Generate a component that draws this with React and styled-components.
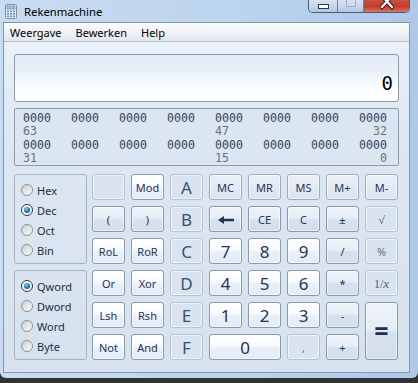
import React from "react"
import styled, { createGlobalStyle, css } from "styled-components"

const GlobalStyle = createGlobalStyle`
  html, body {
    margin: 0;
    padding: 0;
    background: #323232;
  }
  body {
    font-family: "Noto Sans", "Open Sans", sans-serif;
  }
`

const Window = styled.div`
  width: 418px;
  height: 378px;
  box-sizing: border-box;
  padding: 0 8px 5px 3px;
  display: flex;
  flex-direction: column;
  background: linear-gradient(90deg, #c8dcf2 0%, #bdd4ee 55%, #aec8e7 100%);
  border-radius: 0 0 6px 6px;
`

const TitleBar = styled.div`
  height: 22px;
  display: flex;
  align-items: center;
`

const Title = styled.span`
  margin-left: 7px;
  font-size: 11.3px;
  color: #000;
`

const Caption = styled.div`
  margin-left: auto;
  align-self: flex-start;
  display: flex;
  height: 12px;
  border: 1px solid #4a5d78;
  border-top: none;
  border-radius: 0 0 5px 5px;
  overflow: hidden;
`

const CapButton = styled.div`
  width: ${(p) => p.$w}px;
  display: flex;
  justify-content: center;
  overflow: hidden;
  background: linear-gradient(#d7e3f1, #c6d5e8 55%, #b2c6de);
  & + & {
    border-left: 1px solid #6f829d;
  }
  ${(p) =>
    p.$close &&
    css`
      background: linear-gradient(#c9503f, #c13c2c 55%, #d77767);
    `}
`

const MinGlyph = styled.span`
  margin-top: 4px;
  width: 9px;
  height: 3px;
  border: 1px solid #2b3a4f;
  background: #fff;
`

const MaxGlyph = styled.span`
  margin-top: -3px;
  width: 8px;
  height: 8px;
  border: 1px solid #9cafc6;
  box-shadow: inset 0 0 0 1px #d8e2ee;
`

const Client = styled.div`
  flex: 1;
  display: flex;
  flex-direction: column;
  border: 1px solid #8595ab;
  min-height: 0;
`

const MenuBar = styled.div`
  height: 18px;
  display: flex;
  align-items: center;
  gap: 14px;
  padding: 0 6px;
  background: linear-gradient(#fbfcfd, #eef1f6 55%, #e1e6ee);
  border-bottom: 1px solid #b3bdcb;
  font-size: 11px;
  color: #000;
`

const Body = styled.div`
  flex: 1;
  padding: 12px 10px 0;
  background: linear-gradient(#e9f0f8 0%, #dde7f3 30%, #d7e2ef 100%);
  display: flex;
  flex-direction: column;
`

const Display = styled.div`
  height: 48px;
  box-sizing: border-box;
  border: 1px solid #8d9aab;
  border-radius: 3px;
  background: linear-gradient(#e2ebf7 0%, #e9f0f9 35%, #fbfdfe 70%, #ffffff 100%);
  display: flex;
  align-items: flex-end;
  justify-content: flex-end;
  padding: 0 5px 8px 0;
  font-family: "DejaVu Sans Mono", "Liberation Mono", monospace;
  font-size: 19px;
  line-height: 19px;
  color: #000;
`

const BitPanel = styled.div`
  margin-top: 6px;
  height: 58px;
  box-sizing: border-box;
  border: 1px solid #8e9cae;
  border-radius: 2px;
  background: #dce6f2;
  padding: 3px 11px 0 8px;
  display: grid;
  grid-template-columns: repeat(8, 28px);
  grid-auto-rows: 13.4px;
  justify-content: space-between;
  font-family: "DejaVu Sans Mono", "Liberation Mono", monospace;
  font-size: 11.6px;
  line-height: 13.4px;
`

const Bits = styled.span`
  color: #33455c;
`

const BitIndex = styled.span`
  color: #6c7176;
  white-space: nowrap;
  ${(p) => p.$right && "justify-self: end;"}
`

const Lower = styled.div`
  margin-top: 8px;
  display: flex;
  gap: 5px;
`

const Side = styled.div`
  width: 73px;
  display: flex;
  flex-direction: column;
  gap: 6px;
`

const Group = styled.div`
  height: 90px;
  box-sizing: border-box;
  border: 1px solid #a2b3c7;
  border-radius: 3px;
  padding: 5px 0 0 6px;
  display: flex;
  flex-direction: column;
`

const Option = styled.div`
  height: 20px;
  display: flex;
  align-items: center;
  gap: 4px;
  font-size: 11px;
  color: #1c2d44;
`

const Radio = styled.span`
  position: relative;
  width: 12px;
  height: 12px;
  box-sizing: border-box;
  border-radius: 50%;
  border: 1px solid #8c9096;
  background: linear-gradient(135deg, #c9cbce 0%, #e6e7e9 50%, #fafafa 100%);
  ${(p) =>
    p.$checked &&
    css`
      border-color: #2e3a48;
      background: #f4f6f8;
      &::after {
        content: "";
        position: absolute;
        left: 2px;
        top: 2px;
        width: 6px;
        height: 6px;
        border-radius: 50%;
        background: radial-gradient(circle at 40% 35%, #8fd0fa 0%, #2a7fc4 45%, #0f3f6e 100%);
      }
    `}
`

const Keys = styled.div`
  display: grid;
  grid-template-columns: repeat(8, 33px);
  grid-auto-rows: 26px;
  gap: 6px;
`

const variants = {
  num: css`
    border-color: #8999ae;
    background: linear-gradient(#ffffff 0%, #f6f9fc 48%, #eaf0f7 52%, #e3ebf5 100%);
    color: #1f3556;
  `,
  op: css`
    border-color: #8797ad;
    background: linear-gradient(#eef3f9 0%, #e5ecf5 48%, #d8e2ee 52%, #d3deeb 100%);
    color: #1f3556;
  `,
  mem: css`
    border-color: #9dadc1;
    background: linear-gradient(#e9eff7 0%, #e3eaf3 50%, #d9e3ef 100%);
    color: #1f3556;
  `,
  off: css`
    border-color: #b4c4d7;
    background: #dae4f0;
    color: #38506f;
  `,
}

const Key = styled.div`
  box-sizing: border-box;
  border: 1px solid;
  border-radius: 3px;
  box-shadow: inset 0 0 0 1px rgba(255, 255, 255, 0.55);
  display: flex;
  align-items: center;
  justify-content: center;
  font-size: ${(p) => (p.$big ? "17px" : "11px")};
  line-height: 1;
  padding-top: 1px;
  ${(p) => variants[p.$kind]}
  ${(p) => p.$wide && "grid-column: span 2;"}
  ${(p) => p.$tall && "grid-row: span 2;"}
  ${(p) => p.$faint && "color: #5d6f88;"}
`

const Equals = styled.span`
  font-size: 25px;
  font-weight: 700;
  color: #1e3250;
  margin-top: -3px;
`

const Inv = styled.span`
  font-family: "Liberation Serif", "DejaVu Serif", serif;
  font-size: 12px;
  color: #4e6078;
  i {
    font-size: 13px;
  }
`

const CalcIcon = () => (
  <svg width="12" height="15" viewBox="0 0 12 15" style={{ marginLeft: 2 }}>
    <rect x="0.5" y="0.5" width="11" height="14" rx="1.2" fill="#e6eef7" stroke="#7b8ea8" />
    <rect x="2" y="2" width="8" height="3" fill="#a5c0e2" stroke="#5b7aa4" strokeWidth="0.6" />
    {[6.5, 9, 11.5].map((y) =>
      [2, 5, 8].map((x) => (
        <rect key={`${x}-${y}`} x={x} y={y} width="2" height="1.6" fill="#6a8cbd" />
      ))
    )}
  </svg>
)

const CloseGlyph = () => (
  <svg width="14" height="11" viewBox="0 0 14 11">
    <g strokeLinecap="square">
      <path d="M2 -4 L12 7 M12 -4 L2 7" stroke="#4a1710" strokeWidth="4.2" />
      <path d="M2 -4 L12 7 M12 -4 L2 7" stroke="#ffffff" strokeWidth="2.2" />
    </g>
  </svg>
)

const BackArrow = () => (
  <svg width="16" height="8" viewBox="0 0 16 8">
    <path d="M0 4 L6 0 L6 2.7 L16 2.7 L16 5.3 L6 5.3 L6 8 Z" fill="#1f3556" />
  </svg>
)

const bitGroups = ["0000", "0000", "0000", "0000", "0000", "0000", "0000", "0000"]

const keys = [
  { k: "off", l: "" },
  { k: "num", l: "Mod" },
  { k: "off", l: "A", big: true },
  { k: "mem", l: "MC" },
  { k: "mem", l: "MR" },
  { k: "mem", l: "MS" },
  { k: "mem", l: "M+" },
  { k: "mem", l: "M-" },
  { k: "op", l: "(" },
  { k: "op", l: ")" },
  { k: "off", l: "B", big: true },
  { k: "op", l: <BackArrow /> },
  { k: "op", l: "CE" },
  { k: "op", l: "C" },
  { k: "op", l: "±" },
  { k: "off", l: "√", faint: true },
  { k: "num", l: "RoL" },
  { k: "num", l: "RoR" },
  { k: "off", l: "C", big: true },
  { k: "num", l: "7", big: true },
  { k: "num", l: "8", big: true },
  { k: "num", l: "9", big: true },
  { k: "op", l: "/" },
  { k: "off", l: "%", faint: true },
  { k: "num", l: "Or" },
  { k: "num", l: "Xor" },
  { k: "off", l: "D", big: true },
  { k: "num", l: "4", big: true },
  { k: "num", l: "5", big: true },
  { k: "num", l: "6", big: true },
  { k: "op", l: "*" },
  { k: "off", l: <Inv>1/<i>x</i></Inv> },
  { k: "num", l: "Lsh" },
  { k: "num", l: "Rsh" },
  { k: "off", l: "E", big: true },
  { k: "num", l: "1", big: true },
  { k: "num", l: "2", big: true },
  { k: "num", l: "3", big: true },
  { k: "op", l: "-" },
  { k: "op", l: <Equals>=</Equals>, tall: true },
  { k: "num", l: "Not" },
  { k: "num", l: "And" },
  { k: "off", l: "F", big: true },
  { k: "num", l: "0", big: true, wide: true },
  { k: "off", l: ",", faint: true },
  { k: "op", l: "+" },
]

const bases = ["Hex", "Dec", "Oct", "Bin"]
const sizes = ["Qword", "Dword", "Word", "Byte"]

const IndexRow = ({ high, mid, low }) => (
  <>
    <BitIndex>{high}</BitIndex>
    <span />
    <span />
    <span />
    <BitIndex>{mid}</BitIndex>
    <span />
    <span />
    <BitIndex $right>{low}</BitIndex>
  </>
)

const App = () => {
  return (
    <>
      <GlobalStyle />
      <Window>
        <TitleBar>
          <CalcIcon />
          <Title>Rekenmachine</Title>
          <Caption>
            <CapButton $w={28}>
              <MinGlyph />
            </CapButton>
            <CapButton $w={25}>
              <MaxGlyph />
            </CapButton>
            <CapButton $w={45} $close>
              <CloseGlyph />
            </CapButton>
          </Caption>
        </TitleBar>
        <Client>
          <MenuBar>
            <span>Weergave</span>
            <span>Bewerken</span>
            <span>Help</span>
          </MenuBar>
          <Body>
            <Display>0</Display>
            <BitPanel>
              {bitGroups.map((b, i) => (
                <Bits key={`a${i}`}>{b}</Bits>
              ))}
              <IndexRow high="63" mid="47" low="32" />
              {bitGroups.map((b, i) => (
                <Bits key={`b${i}`}>{b}</Bits>
              ))}
              <IndexRow high="31" mid="15" low="0" />
            </BitPanel>
            <Lower>
              <Side>
                <Group>
                  {bases.map((b) => (
                    <Option key={b}>
                      <Radio $checked={b === "Dec"} />
                      {b}
                    </Option>
                  ))}
                </Group>
                <Group>
                  {sizes.map((s) => (
                    <Option key={s}>
                      <Radio $checked={s === "Qword"} />
                      {s}
                    </Option>
                  ))}
                </Group>
              </Side>
              <Keys>
                {keys.map((key, i) => (
                  <Key
                    key={i}
                    $kind={key.k}
                    $big={key.big}
                    $wide={key.wide}
                    $tall={key.tall}
                    $faint={key.faint}
                  >
                    {key.l}
                  </Key>
                ))}
              </Keys>
            </Lower>
          </Body>
        </Client>
      </Window>
    </>
  )
}

export default App
